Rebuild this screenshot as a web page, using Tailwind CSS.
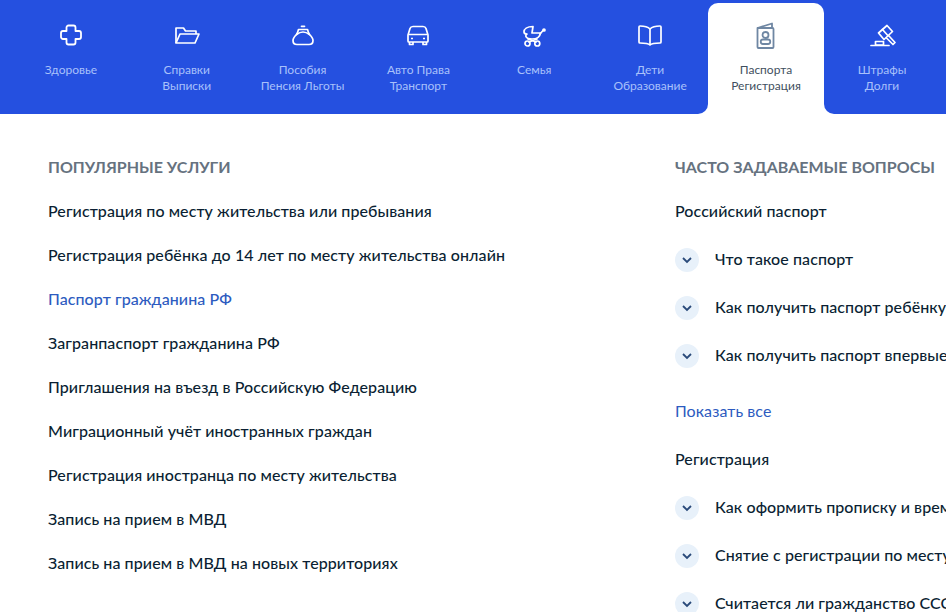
<!doctype html>
<html lang="ru"><head><meta charset="utf-8"><script src="https://cdn.jsdelivr.net/npm/@tailwindcss/browser@4"></script></head>
<body class="m-0 bg-white">
<div class="w-[946px] h-[612px] overflow-hidden font-['Lato','Noto_Sans',sans-serif] text-[#0b1f33]">
  <nav class="h-[114px] bg-[#2550e0] flex pl-[13px] pt-[3px] overflow-hidden">
    <a class="w-[115.83px] shrink-0 flex flex-col items-center pt-[19px] text-[12px] leading-[16px] text-[#a9c1fb] text-center">
      <svg class="w-[28px] h-[28px] mb-[12px]" viewBox="0 0 28 28" fill="none" stroke="#fff" stroke-width="1.800" stroke-linejoin="round"><path d="M9.500 5.500A2 2 0 0 1 11.500 3.500h5a2 2 0 0 1 2 2V9h3.500a2 2 0 0 1 2 2v4a2 2 0 0 1-2 2h-3.500v3.500a2 2 0 0 1-2 2h-5a2 2 0 0 1-2-2V17H6a2 2 0 0 1-2-2v-4a2 2 0 0 1 2-2h3.500z"/></svg>
      <span>Здоровье</span></a>
    <a class="w-[115.83px] shrink-0 flex flex-col items-center pt-[19px] text-[12px] leading-[16px] text-[#a9c1fb] text-center">
      <svg class="w-[28px] h-[28px] mb-[12px]" viewBox="0 0 28 28" fill="none" stroke="#fff" stroke-width="1.700" stroke-linejoin="round"><path d="M3 21V6h7.500l2 3H23v3"/><path d="M3 21l4-9h19l-4 9z"/></svg>
      <span>Справки<br>Выписки</span></a>
    <a class="w-[115.83px] shrink-0 flex flex-col items-center pt-[19px] text-[12px] leading-[16px] text-[#a9c1fb] text-center">
      <svg class="w-[28px] h-[28px] mb-[12px]" viewBox="0 0 28 28" fill="none" stroke="#fff" stroke-width="1.700" stroke-linejoin="round" stroke-linecap="round"><path d="M9.500 7.500h9c.5 2 1 3.500 2 5 2 2 3.500 4 3.500 6 0 3-2 4-4 4H8c-2 0-4-1-4-4 0-2 1.500-4 3.500-6 1-1.500 1.500-3 2-5z"/><path d="M7.500 12.500c2-1.500 4-2.500 6.500-2.500s4.500 1 6.500 2.500"/><path d="M12.500 4.300h3"/></svg>
      <span>Пособия<br>Пенсия Льготы</span></a>
    <a class="w-[115.83px] shrink-0 flex flex-col items-center pt-[19px] text-[12px] leading-[16px] text-[#a9c1fb] text-center">
      <svg class="w-[28px] h-[28px] mb-[12px]" viewBox="0 0 28 28" fill="none" stroke="#fff" stroke-width="1.700" stroke-linejoin="round"><path d="M4 13l2-6.500c.5-1.500 1.500-2 3-2h10c1.500 0 2.500.5 3 2l2 6.500v6a1 1 0 0 1-1 1H5a1 1 0 0 1-1-1z"/><path d="M4.500 12.500h19M5.500 20v2.500h3.500V20M19 20v2.500h3.500V20"/><path d="M7 16.500h2M19 16.500h2"/></svg>
      <span>Авто Права<br>Транспорт</span></a>
    <a class="w-[115.83px] shrink-0 flex flex-col items-center pt-[19px] text-[12px] leading-[16px] text-[#a9c1fb] text-center">
      <svg class="w-[28px] h-[28px] mb-[12px]" viewBox="0 0 28 28" fill="none" stroke="#fff" stroke-width="1.700" stroke-linejoin="round" stroke-linecap="round"><path d="M13 4.500C7 4.500 4 7 4 10c0 1 1 2 3 2-2 1-2 5 5 5 5 0 8-2 8.500-6H12z"/><path d="M20 12l3-3.500"/><circle cx="24" cy="8" r="1" fill="#fff"/><path d="M8 17l8 3M17 17l-8 3"/><circle cx="7.500" cy="21.500" r="2.500"/><circle cx="17.300" cy="21.500" r="2.500"/></svg>
      <span>Семья</span></a>
    <a class="w-[115.85px] shrink-0 flex flex-col items-center pt-[19px] text-[12px] leading-[16px] text-[#a9c1fb] text-center">
      <svg class="w-[28px] h-[28px] mb-[12px]" viewBox="0 0 28 28" fill="none" stroke="#fff" stroke-width="1.700" stroke-linejoin="round"><path d="M14 7c-2-2-5-3-10-3a1 1 0 0 0-1 1v15a1 1 0 0 0 1 1c5 0 8 0 10 2 2-2 5-2 10-2a1 1 0 0 0 1-1V5a1 1 0 0 0-1-1c-5 0-8 1-10 3z"/><path d="M14 7v15"/></svg>
      <span>Дети<br>Образование</span></a>
    <a class="relative w-[116px] shrink-0 flex flex-col items-center pt-[19px] text-[12px] leading-[16px] text-[#3f4f60] text-center bg-white rounded-t-[10px]">
      <svg class="w-[28px] h-[28px] mb-[12px]" viewBox="0 0 28 28" fill="none" stroke="#6f87a3" stroke-width="1.800" stroke-linejoin="round"><path d="M5.500 6l14.500-4.500v4"/><path d="M5.500 6h15a1 1 0 0 1 1 1v18a1 1 0 0 1-1 1h-14a1 1 0 0 1-1-1z"/><circle cx="13.500" cy="13" r="3"/><path d="M11 17.500h5c3 0 3 4.500 0 4.500h-5c-3 0-3-4.500 0-4.500z"/></svg>
      <span>Паспорта<br>Регистрация</span>
      <span class="absolute left-[-10px] bottom-0 w-[10px] h-[10px] bg-white"><span class="block w-full h-full bg-[#2550e0] rounded-br-[10px]"></span></span>
      <span class="absolute right-[-10px] bottom-0 w-[10px] h-[10px] bg-white"><span class="block w-full h-full bg-[#2550e0] rounded-bl-[10px]"></span></span>
    </a>
    <a class="w-[116px] shrink-0 flex flex-col items-center pt-[19px] text-[12px] leading-[16px] text-[#a9c1fb] text-center">
      <svg class="w-[28px] h-[28px] mb-[12px]" viewBox="0 0 28 28" fill="none" stroke="#fff" stroke-width="1.700" stroke-linejoin="round" stroke-linecap="round"><path d="M10.500 11L19 3.500l5.500 6L16 17.500z"/><path d="M14.500 7.500l5.500 6.300"/><path d="M21 14l6 6.500-2 2-6.500-6.500"/><path d="M7.500 19.500h8v3.500h-8z"/><path d="M3 23.500h18"/></svg>
      <span>Штрафы<br>Долги</span></a>
  </nav>
  <main class="flex pl-[48px] pt-[43px]">
    <section class="w-[627px] shrink-0">
      <h2 class="text-[16px] leading-[20px] font-bold text-[#66727f] mb-[12px]">ПОПУЛЯРНЫЕ УСЛУГИ</h2>
      <ul class="flex flex-col text-[16px] leading-[24px] font-medium tracking-[0.08px]">
        <li class="py-[10px]">Регистрация по месту жительства или пребывания</li>
        <li class="py-[10px]">Регистрация ребёнка до 14 лет по месту жительства онлайн</li>
        <li class="py-[10px] text-[#2d5bc0]">Паспорт гражданина РФ</li>
        <li class="py-[10px]">Загранпаспорт гражданина РФ</li>
        <li class="py-[10px]">Приглашения на въезд в Российскую Федерацию</li>
        <li class="py-[10px]">Миграционный учёт иностранных граждан</li>
        <li class="py-[10px]">Регистрация иностранца по месту жительства</li>
        <li class="py-[10px]">Запись на прием в МВД</li>
        <li class="py-[10px]">Запись на прием в МВД на новых территориях</li>
      </ul>
    </section>
    <section class="shrink-0 w-[400px] text-[16px] leading-[24px] font-medium tracking-[0.08px]">
      <h2 class="leading-[20px] font-bold text-[#66727f] mb-[22px] whitespace-nowrap tracking-normal">ЧАСТО ЗАДАВАЕМЫЕ ВОПРОСЫ</h2>
      <h3 class="font-medium">Российский паспорт</h3>
      <ul class="mt-[24px] flex flex-col gap-[24px]">
        <li class="flex items-center gap-[16px] whitespace-nowrap"><span class="relative top-[1px] w-[24px] h-[24px] rounded-full bg-[#e8f1fa] flex items-center justify-center shrink-0"><svg class="w-[12px] h-[8px]" viewBox="0 0 12 8" fill="none" stroke="#2a4a7a" stroke-width="1.800"><path d="M2 2l4 4 4-4"/></svg></span>Что такое паспорт</li>
        <li class="flex items-center gap-[16px] whitespace-nowrap"><span class="relative top-[1px] w-[24px] h-[24px] rounded-full bg-[#e8f1fa] flex items-center justify-center shrink-0"><svg class="w-[12px] h-[8px]" viewBox="0 0 12 8" fill="none" stroke="#2a4a7a" stroke-width="1.800"><path d="M2 2l4 4 4-4"/></svg></span>Как получить паспорт ребёнку</li>
        <li class="flex items-center gap-[16px] whitespace-nowrap"><span class="relative top-[1px] w-[24px] h-[24px] rounded-full bg-[#e8f1fa] flex items-center justify-center shrink-0"><svg class="w-[12px] h-[8px]" viewBox="0 0 12 8" fill="none" stroke="#2a4a7a" stroke-width="1.800"><path d="M2 2l4 4 4-4"/></svg></span>Как получить паспорт впервые</li>
      </ul>
      <p class="mt-[32px] font-normal text-[#2d5bc0]">Показать все</p>
      <h3 class="mt-[24px] font-medium">Регистрация</h3>
      <ul class="mt-[24px] flex flex-col gap-[24px]">
        <li class="flex items-center gap-[16px] whitespace-nowrap"><span class="relative top-[1px] w-[24px] h-[24px] rounded-full bg-[#e8f1fa] flex items-center justify-center shrink-0"><svg class="w-[12px] h-[8px]" viewBox="0 0 12 8" fill="none" stroke="#2a4a7a" stroke-width="1.800"><path d="M2 2l4 4 4-4"/></svg></span>Как оформить прописку и временную</li>
        <li class="flex items-center gap-[16px] whitespace-nowrap"><span class="relative top-[1px] w-[24px] h-[24px] rounded-full bg-[#e8f1fa] flex items-center justify-center shrink-0"><svg class="w-[12px] h-[8px]" viewBox="0 0 12 8" fill="none" stroke="#2a4a7a" stroke-width="1.800"><path d="M2 2l4 4 4-4"/></svg></span>Снятие с регистрации по месту</li>
        <li class="flex items-center gap-[16px] whitespace-nowrap"><span class="relative top-[1px] w-[24px] h-[24px] rounded-full bg-[#e8f1fa] flex items-center justify-center shrink-0"><svg class="w-[12px] h-[8px]" viewBox="0 0 12 8" fill="none" stroke="#2a4a7a" stroke-width="1.800"><path d="M2 2l4 4 4-4"/></svg></span>Считается ли гражданство СССР</li>
      </ul>
    </section>
  </main>
</div>
</body></html>
